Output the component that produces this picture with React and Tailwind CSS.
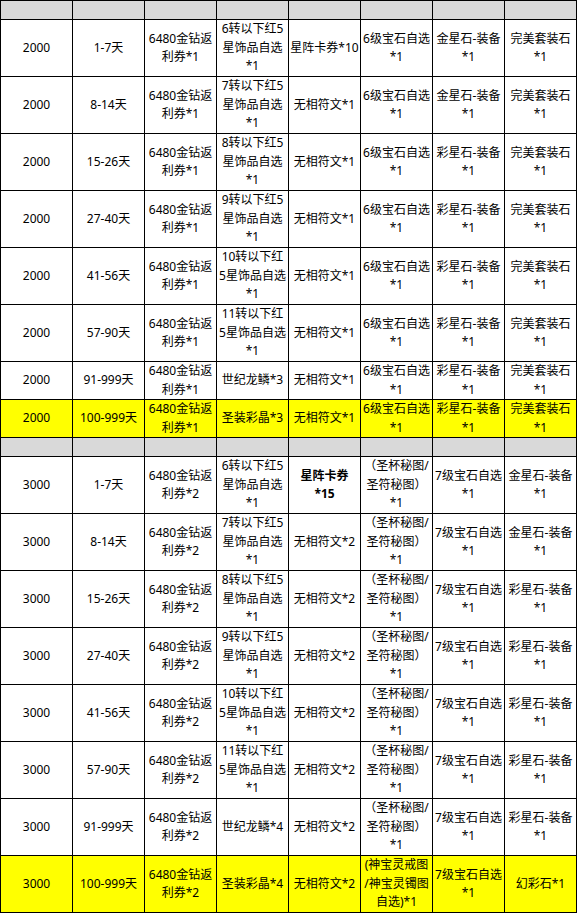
import React from 'react';

// each cell is a list of lines; rows carry a height and optional yellow flag
const r2000 = [
    { h: 'tall', cells: [['2000'], ['1-7天'], ['6480金钻返', '利券*1'], ['6转以下红5', '星饰品自选', '*1'], ['星阵卡券*10'], ['6级宝石自选', '*1'], ['金星石-装备', '*1'], ['完美套装石', '*1']] },
    { h: 'tall', cells: [['2000'], ['8-14天'], ['6480金钻返', '利券*1'], ['7转以下红5', '星饰品自选', '*1'], ['无相符文*1'], ['6级宝石自选', '*1'], ['金星石-装备', '*1'], ['完美套装石', '*1']] },
    { h: 'tall', cells: [['2000'], ['15-26天'], ['6480金钻返', '利券*1'], ['8转以下红5', '星饰品自选', '*1'], ['无相符文*1'], ['6级宝石自选', '*1'], ['彩星石-装备', '*1'], ['完美套装石', '*1']] },
    { h: 'tall', cells: [['2000'], ['27-40天'], ['6480金钻返', '利券*1'], ['9转以下红5', '星饰品自选', '*1'], ['无相符文*1'], ['6级宝石自选', '*1'], ['彩星石-装备', '*1'], ['完美套装石', '*1']] },
    { h: 'tall', cells: [['2000'], ['41-56天'], ['6480金钻返', '利券*1'], ['10转以下红', '5星饰品自选', '*1'], ['无相符文*1'], ['6级宝石自选', '*1'], ['彩星石-装备', '*1'], ['完美套装石', '*1']] },
    { h: 'tall', cells: [['2000'], ['57-90天'], ['6480金钻返', '利券*1'], ['11转以下红', '5星饰品自选', '*1'], ['无相符文*1'], ['6级宝石自选', '*1'], ['彩星石-装备', '*1'], ['完美套装石', '*1']] },
    { h: 'short', cells: [['2000'], ['91-999天'], ['6480金钻返', '利券*1'], ['世纪龙鳞*3'], ['无相符文*1'], ['6级宝石自选', '*1'], ['彩星石-装备', '*1'], ['完美套装石', '*1']] },
    { h: 'short', yellow: true, cells: [['2000'], ['100-999天'], ['6480金钻返', '利券*1'], ['圣装彩晶*3'], ['无相符文*1'], ['6级宝石自选', '*1'], ['彩星石-装备', '*1'], ['完美套装石', '*1']] },
];

const map = ['（圣杯秘图/', '圣符秘图）', '*1'];

const r3000 = [
    { h: 'tall', cells: [['3000'], ['1-7天'], ['6480金钻返', '利券*2'], ['6转以下红5', '星饰品自选', '*1'], ['星阵卡券', '*15'], map, ['7级宝石自选', '*1'], ['金星石-装备', '*1']], bold: 4 },
    { h: 'tall', cells: [['3000'], ['8-14天'], ['6480金钻返', '利券*2'], ['7转以下红5', '星饰品自选', '*1'], ['无相符文*2'], map, ['7级宝石自选', '*1'], ['金星石-装备', '*1']] },
    { h: 'tall', cells: [['3000'], ['15-26天'], ['6480金钻返', '利券*2'], ['8转以下红5', '星饰品自选', '*1'], ['无相符文*2'], map, ['7级宝石自选', '*1'], ['彩星石-装备', '*1']] },
    { h: 'tall', cells: [['3000'], ['27-40天'], ['6480金钻返', '利券*2'], ['9转以下红5', '星饰品自选', '*1'], ['无相符文*2'], map, ['7级宝石自选', '*1'], ['彩星石-装备', '*1']] },
    { h: 'tall', cells: [['3000'], ['41-56天'], ['6480金钻返', '利券*2'], ['10转以下红', '5星饰品自选', '*1'], ['无相符文*2'], map, ['7级宝石自选', '*1'], ['彩星石-装备', '*1']] },
    { h: 'tall', cells: [['3000'], ['57-90天'], ['6480金钻返', '利券*2'], ['11转以下红', '5星饰品自选', '*1'], ['无相符文*2'], map, ['7级宝石自选', '*1'], ['彩星石-装备', '*1']] },
    { h: 'tall', cells: [['3000'], ['91-999天'], ['6480金钻返', '利券*2'], ['世纪龙鳞*4'], ['无相符文*2'], map, ['7级宝石自选', '*1'], ['彩星石-装备', '*1']] },
    { h: 'tall', yellow: true, cells: [['3000'], ['100-999天'], ['6480金钻返', '利券*2'], ['圣装彩晶*4'], ['无相符文*2'], ['(神宝灵戒图', '/神宝灵镯图', '自选)*1'], ['7级宝石自选', '*1'], ['幻彩石*1']] },
];

const GreyRow = () => (
    <>
        {Array.from({ length: 8 }).map((_, i) => (
            <div key={i} className="h-[19px] bg-[#d9d9d9] border-r border-b border-black" />
        ))}
    </>
);

const Row = ({ row }) => (
    <>
        {row.cells.map((lines, i) => (
            <div
                key={i}
                className={`${row.h === 'tall' ? 'h-[57px]' : 'h-[38px]'} ${row.yellow ? 'bg-[#ffff00]' : 'bg-white'} flex items-center justify-center text-center whitespace-nowrap border-r border-b border-black ${row.bold === i ? 'font-bold' : ''}`}
            >
                <div>
                    {lines.map((l, j) => (
                        <div key={j}>{l}</div>
                    ))}
                </div>
            </div>
        ))}
    </>
);

export default function App() {
    return (
        <div className="w-[577px] bg-white">
            <div
                className="grid grid-cols-[repeat(8,72px)] border-l border-t border-black text-[12px] leading-[18.5px] text-black"
                style={{ fontFamily: '"Noto Sans", "Noto Sans CJK SC", sans-serif' }}
            >
                <GreyRow />
                {r2000.map((row, i) => <Row key={'a' + i} row={row} />)}
                <GreyRow />
                {r3000.map((row, i) => <Row key={'b' + i} row={row} />)}
            </div>
        </div>
    );
}
